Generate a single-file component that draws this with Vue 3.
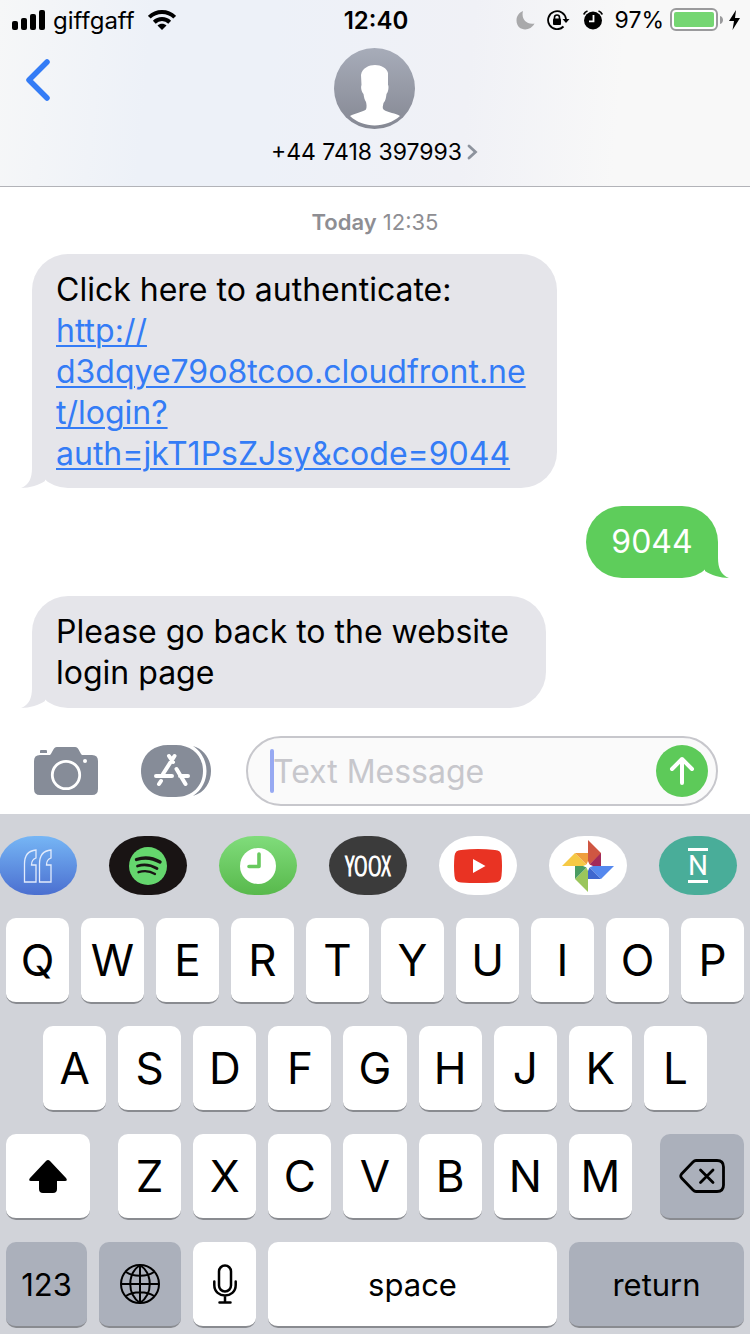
<script setup>
import { ref } from 'vue'

const message = ref('')
const topRow = 'QWERTYUIOP'.split('')
const middleRow = 'ASDFGHJKL'.split('')
const bottomRow = 'ZXCVBNM'.split('')
</script>

<template>
  <main class="phone">
    <header class="header">
      <div class="status">
        <div class="status-side">
          <svg width="34" height="20" viewBox="0 0 34 20" aria-hidden="true">
            <rect x="0" y="11" width="6" height="9" rx="2" />
            <rect x="9" y="8" width="6" height="12" rx="2" />
            <rect x="18" y="4" width="6" height="16" rx="2" />
            <rect x="27" y="0" width="6" height="20" rx="2" />
          </svg>
          <span class="carrier">giffgaff</span>
          <svg width="28" height="20" viewBox="0 0 28 20" aria-hidden="true">
            <g fill="none" stroke="#000" stroke-width="4">
              <path d="M1.3 7.2C8.300 .3 19.700 .3 26.700 7.200" />
              <path d="M6.300 12.200C10.600 8 17.400 8 21.700 12.200" />
            </g>
            <path d="M9.500 15.500C12 13.300 16 13.300 18.500 15.500L14 20Z" />
          </svg>
        </div>
        <span class="clock">12:40</span>
        <div class="status-side status-right">
          <svg width="19" height="19" viewBox="0 0 18 19" aria-hidden="true">
            <path d="M6.500 0C4.500 7.500 9.500 14 18 12.500C13.500 21.500 0 20 0 9.500C0 5 2.500 1.500 6.500 0Z" fill="#a9a9ab" />
          </svg>
          <svg class="lock" width="23" height="20" viewBox="0 0 23 20" aria-hidden="true">
            <path d="M16.500 16.500A9 9 0 1 1 19 9" fill="none" stroke="#000" stroke-width="1.800" />
            <path d="M15.500 9H22.500L19 13Z" />
            <rect x="6" y="8.500" width="8" height="6.500" rx="1" />
            <path d="M7.500 9V7.500A2.500 2.500 0 0 1 12.500 7.500V9" fill="none" stroke="#000" stroke-width="1.600" />
          </svg>
          <svg class="alarm" width="20" height="20" viewBox="0 0 20 20" aria-hidden="true">
            <circle cx="10" cy="10.500" r="9" />
            <path d="M.8 4.500A6 6 0 0 1 4.500 1M19.200 4.500A6 6 0 0 0 15.500 1" fill="none" stroke="#000" stroke-width="1.800" />
            <path d="M10.500 5V11.300H6" fill="none" stroke="#fff" stroke-width="1.800" />
          </svg>
          <span class="percent">97%</span>
          <svg width="54" height="24" viewBox="0 0 54 24" aria-hidden="true">
            <rect x="1" y="1" width="46" height="21" rx="5" fill="#fff" stroke="#9a9a9c" stroke-width="2" />
            <rect x="4" y="4" width="40" height="15" rx="2" fill="#75d672" />
            <path d="M50 8C54 9 54 15 50 16Z" fill="#9a9a9c" />
          </svg>
          <svg class="bolt" width="11" height="20" viewBox="0 0 11 20" aria-hidden="true">
            <path d="M7 0L0 11H5L3.500 20L11 8H6Z" />
          </svg>
        </div>
      </div>
      <div class="contact">
        <button class="back" type="button" aria-label="Back">
          <svg width="26" height="42" viewBox="0 0 26 42">
            <path d="M22 3L4 21L22 39" fill="none" stroke="#347cf6" stroke-width="5.500" stroke-linecap="round" stroke-linejoin="round" />
          </svg>
        </button>
        <button class="person" type="button">
          <svg width="81" height="81" viewBox="0 0 81 81" aria-hidden="true">
            <defs>
              <linearGradient id="avatar" x2="0" y2="1">
                <stop stop-color="#a7acb9" />
                <stop offset="1" stop-color="#858893" />
              </linearGradient>
            </defs>
            <circle cx="40.500" cy="40.500" r="40.500" fill="url(#avatar)" />
            <path d="M41 17C47 17 53 20 54 25L54 37C55 38 54.500 44 52.500 46C52 50 51.500 53 49.500 55C49 58 48 60 49.500 61.500C54 65 62 65 66 68C52 80.500 29 80.500 16 68C21 65 28 64.500 32 61.500C33 59 32.500 56 32 54C30.500 52 30 49 29.500 46C27.500 44 26.500 39 27.500 37L27 27C28 20 35 17 41 17Z" fill="#fff" />
          </svg>
          <span class="number">+44 7418 397993
            <svg width="11" height="16" viewBox="0 0 11 16" aria-hidden="true">
              <path d="M2 2L8.500 8L2 14" fill="none" stroke="#8d939d" stroke-width="2.800" stroke-linecap="round" />
            </svg>
          </span>
        </button>
      </div>
    </header>

    <section class="thread" aria-label="Conversation">
      <p class="stamp"><strong>Today</strong> 12:35</p>
      <p class="bubble received wide">
        Click here to authenticate:<br />
        <a href="http://d3dqye79o8tcoo.cloudfront.net/login?auth=jkT1PsZJsy&amp;code=9044">http://<br />d3dqye79o8tcoo.cloudfront.ne<br />t/login?<br />auth=jkT1PsZJsy&amp;code=9044</a>
        <svg class="tail" width="26" height="36" viewBox="0 0 26 36" aria-hidden="true">
          <path d="M11 0V16C11 26 8 33 0 36C9 36 18 33 24 29L24 0Z" fill="#e5e5ea" />
        </svg>
      </p>
      <p class="bubble sent">
        9044
        <svg class="tail" width="26" height="36" viewBox="0 0 26 36" aria-hidden="true">
          <path d="M15 0V16C15 26 18 33 26 36C17 36 8 33 2 29L2 0Z" fill="#5ecd5b" />
        </svg>
      </p>
      <p class="bubble received">
        Please go back to the website<br />login page
        <svg class="tail" width="26" height="36" viewBox="0 0 26 36" aria-hidden="true">
          <path d="M11 0V16C11 26 8 33 0 36C9 36 18 33 24 29L24 0Z" fill="#e5e5ea" />
        </svg>
      </p>
    </section>

    <form class="composer" @submit.prevent>
      <button class="tool" type="button" aria-label="Camera">
        <svg width="64" height="48" viewBox="0 0 64 48">
          <path d="M6 8H16C18 7 19 0 23 0H41C45 0 46 7 48 8H58Q64 8 64 14V42Q64 48 58 48H6Q0 48 0 42V14Q0 8 6 8ZM7 3H12Q13 3 13 4V6H6V4Q6 3 7 3Z" fill="#868c98" />
          <circle cx="32" cy="28" r="13.700" fill="none" stroke="#fff" stroke-width="2.800" />
          <circle cx="51" cy="14" r="2" fill="#fff" />
        </svg>
      </button>
      <button class="tool store" type="button" aria-label="App Store">
        <svg width="70" height="52" viewBox="0 0 70 52">
          <path d="M52 1C76 8 76 44 52 51C70 39 70 13 52 1Z" fill="#868c98" />
          <path d="M27 0H35C51 0 62 11 62 26S51 52 35 52H27C11 52 0 41 0 26S11 0 27 0Z" fill="#868c98" />
          <g stroke="#fff" stroke-width="4" stroke-linecap="round">
            <path d="M33.500 11L22 29M28 11L32 17M35.500 24L44.500 39M15 31H31M39 31H47M20 36L18 39" />
          </g>
        </svg>
      </button>
      <label class="field">
        <input v-model="message" type="text" placeholder="Text Message" aria-label="Text Message" />
        <button class="send" type="submit" aria-label="Send">
          <svg width="52" height="52" viewBox="0 0 52 52">
            <path d="M26 38V14M16 24L26 14L36 24" fill="none" stroke="#fff" stroke-width="4" stroke-linecap="round" stroke-linejoin="round" />
          </svg>
        </button>
      </label>
    </form>

    <section class="keyboard" aria-label="Keyboard">
      <nav class="apps" aria-label="Message apps">
        <button class="app quotes" type="button" aria-label="Quotes">
          <svg width="30" height="34" viewBox="0 0 30 34" fill="none" stroke="#e2ebfc" stroke-width="1.300">
            <path d="M1.500 33V15C1.500 6 6 1.500 13 1V9C10 10 8.500 12 8.500 16H13V33Z" />
            <path d="M16.500 33V15C16.500 6 21 1.500 28 1V9C25 10 23.500 12 23.500 16H28V33Z" />
          </svg>
        </button>
        <button class="app spotify" type="button" aria-label="Spotify">
          <svg width="38" height="38" viewBox="0 0 38 38">
            <circle cx="19" cy="19" r="19" fill="#65d66e" />
            <g fill="none" stroke="#191414" stroke-linecap="round">
              <path d="M7.500 12.500C15 10 24 11 31 15" stroke-width="3.400" />
              <path d="M8.500 19C15 17 22 18 28 21.500" stroke-width="2.800" />
              <path d="M9.500 25.200C15 23.500 21 24 26 27" stroke-width="2.300" />
            </g>
          </svg>
        </button>
        <button class="app recent" type="button" aria-label="Recents">
          <svg width="36" height="36" viewBox="0 0 36 36">
            <circle cx="18" cy="18" r="18" fill="#fff" />
            <path d="M19 6V18.500H9" fill="none" stroke="#68c95e" stroke-width="3.600" stroke-linecap="round" stroke-linejoin="round" />
          </svg>
        </button>
        <button class="app yoox" type="button">YOOX</button>
        <button class="app white" type="button" aria-label="YouTube">
          <svg width="48" height="34" viewBox="0 0 48 34">
            <path d="M7 1Q24-1 41 1Q47 1 47.500 7Q48.500 17 47.500 27Q47 33 41 33.500Q24 34.500 7 33.500Q1 33 .5 27Q-.5 17 .5 7Q1 1 7 1Z" fill="#e93323" />
            <path d="M19 10L31.500 17L19 24Z" fill="#fff" />
          </svg>
        </button>
        <button class="app white" type="button" aria-label="Photos">
          <svg width="52" height="52" viewBox="0 0 52 52">
            <path d="M26 0L39 13V14L26 26Z" fill="#cf5642" />
            <path d="M39 13V26H26Z" fill="#a32a59" />
            <path d="M52 26L39 39L26 26Z" fill="#5588ee" />
            <path d="M26 26L39 39H26Z" fill="#3f67cf" />
            <path d="M26 52L13 39L26 26Z" fill="#9bc65c" />
            <path d="M13 39V26H26Z" fill="#4a9c62" />
            <path d="M0 26L13 13L26 26Z" fill="#f6c945" />
            <path d="M13 13H26V26Z" fill="#ef9f3d" />
            <path d="M26 21L27.500 24.500L31 26L27.500 27.500L26 31L24.500 27.500L21 26L24.500 24.500Z" fill="#fff" />
          </svg>
        </button>
        <button class="app news" type="button"><span>N</span></button>
      </nav>

      <div class="keys">
        <div class="row">
          <button v-for="k in topRow" :key="k" class="key" type="button">{{ k }}</button>
        </div>
        <div class="row middle">
          <button v-for="k in middleRow" :key="k" class="key" type="button">{{ k }}</button>
        </div>
        <div class="row">
          <button class="key shift" type="button" aria-label="Shift">
            <svg width="38" height="33" viewBox="0 0 38 33">
              <path d="M19 0Q20 0 21 1L37 18Q39 21 36 21H28V29Q28 33 24 33H14Q10 33 10 29V21H2Q-1 21 1 18L17 1Q18 0 19 0Z" />
            </svg>
          </button>
          <button v-for="k in bottomRow" :key="k" class="key" type="button">{{ k }}</button>
          <button class="key dark delete" type="button" aria-label="Delete">
            <svg width="46" height="34" viewBox="0 0 46 34" fill="none" stroke="#000" stroke-width="2.800" stroke-linecap="round" stroke-linejoin="round">
              <path d="M17 1.500H38Q44.500 1.500 44.500 8V26Q44.500 32.500 38 32.500H17Q15.500 32.500 14 31L2.500 19Q1 17 2.500 15L14 3Q15.500 1.500 17 1.500Z" />
              <path d="M21.500 11L34 23.500M34 11L21.500 23.500" />
            </svg>
          </button>
        </div>
        <div class="row">
          <button class="key dark word numbers" type="button">123</button>
          <button class="key dark globe" type="button" aria-label="Next keyboard">
            <svg width="40" height="40" viewBox="0 0 40 40" fill="none" stroke="#000" stroke-width="2">
              <circle cx="20" cy="20" r="19" />
              <path d="M20 1V39M1 20H39M6 8C13 13 27 13 34 8M6 32C13 27 27 27 34 32" />
              <path d="M20 1C7 10 7 30 20 39C33 30 33 10 20 1Z" />
            </svg>
          </button>
          <button class="key" type="button" aria-label="Dictation">
            <svg width="24" height="40" viewBox="0 0 24 40" fill="none" stroke="#000" stroke-width="2.500" stroke-linecap="round">
              <rect x="6" y="1.500" width="12" height="26" rx="6" />
              <path d="M1.300 17.500V21C1.300 35 22.700 35 22.700 21V17.500M12 31.500V38M6.500 38.500H17.500" />
            </svg>
          </button>
          <button class="key word space" type="button">space</button>
          <button class="key dark word return" type="button">return</button>
        </div>
      </div>
    </section>
  </main>
</template>

<style>
body {
  background: #fff;
}
</style>

<style scoped>
.phone {
  min-height: 100vh;
  display: flex;
  flex-direction: column;
  overflow: hidden;
  color: #000;
  font-family: Inter, "Liberation Sans", sans-serif;
}

button {
  padding: 0;
  border: 0;
  background: none;
  color: inherit;
  font: inherit;
}

svg {
  display: block;
  flex: none;
}

.header {
  padding-bottom: 19px;
  border-bottom: 1px solid #b2b3b8;
  background: linear-gradient(95deg, #f6f7f8 0, #edf1f8 20%, #edf1f8 36%, #f0f1f6 62%, #f8f8f8 82%);
}

.status {
  display: grid;
  grid-template-columns: 1fr auto 1fr;
  align-items: center;
  height: 40px;
  padding: 0 10px 0 12px;
}

.status-side {
  display: flex;
  align-items: center;
}

.status-right {
  justify-content: flex-end;
}

.carrier {
  margin: 0 13px 0 7px;
  font-size: 24px;
}

.clock {
  font-size: 24px;
  font-weight: 600;
}

.lock {
  margin-left: 12px;
}

.alarm {
  margin-left: 13px;
}

.percent {
  margin: 0 6px 0 12px;
  font-size: 23px;
}

.bolt {
  margin-left: 5px;
}

.contact {
  display: grid;
  grid-template-columns: 1fr auto 1fr;
  align-items: start;
  padding: 8px 0 0 25px;
}

.back {
  justify-self: start;
  padding: 11px 0;
}

.person {
  display: flex;
  flex-direction: column;
  align-items: center;
  gap: 8px;
  margin-right: 26px;
}

.number {
  display: flex;
  align-items: center;
  gap: 5px;
  font-size: 23px;
  line-height: 30px;
}

.thread {
  flex: 1;
  display: flex;
  flex-direction: column;
  gap: 18px;
  padding: 21px 32px 28px;
}

.stamp {
  margin: 0;
  color: #8e8e93;
  font-size: 22px;
  line-height: 28px;
  text-align: center;
}

.stamp strong {
  font-weight: 600;
}

.bubble {
  position: relative;
  min-width: 514px;
  margin: 0;
  padding: 15px 24px;
  box-sizing: border-box;
  border-radius: 36px;
  font-size: 32px;
  line-height: 41px;
  white-space: nowrap;
}

.received {
  align-self: flex-start;
  background: #e5e5ea;
}

.wide {
  min-width: 525px;
  padding-bottom: 14px;
}

.sent {
  align-self: flex-end;
  min-width: 132px;
  padding-bottom: 16px;
  background: #5ecd5b;
  color: #fff;
  text-align: center;
}

.bubble a {
  color: #347cf6;
  text-decoration-thickness: 2px;
  text-underline-offset: 3px;
}

.tail {
  position: absolute;
  bottom: 0;
}

.received .tail {
  left: -11px;
}

.sent .tail {
  right: -11px;
}

.composer {
  display: flex;
  align-items: center;
  padding: 0 32px 8px 34px;
}

.store {
  margin: 0 35px 0 43px;
}

.field {
  position: relative;
  flex: 1;
  min-width: 0;
  display: flex;
  align-items: center;
  height: 66px;
  padding: 0 8px 0 25px;
  border: 2px solid #c7c7cc;
  border-radius: 35px;
  background: #fafafa;
}

.field::before {
  content: "";
  position: absolute;
  left: 22px;
  width: 4px;
  height: 44px;
  border-radius: 2px;
  background: #97a9f2;
}

.field input {
  flex: 1;
  min-width: 0;
  padding: 0;
  border: 0;
  outline: 0;
  background: none;
  font: inherit;
  font-size: 32px;
}

.field input::placeholder {
  color: #c7c7cc;
  opacity: 1;
}

.send {
  border-radius: 50%;
  background: #5dca59;
}

.keyboard {
  padding-bottom: 6px;
  background: #d1d3d9;
}

.apps {
  display: flex;
  justify-content: space-between;
  margin: 0 13px 0 -1px;
  padding: 22px 0 23px;
}

.app {
  display: flex;
  align-items: center;
  justify-content: center;
  width: 78px;
  height: 59px;
  border-radius: 36px / 30px;
}

.quotes {
  background: linear-gradient(#76b6f5, #4b6fd0);
}

.spotify {
  background: #191414;
}

.recent {
  background: linear-gradient(#80dc7b, #58b94c);
}

.yoox {
  background: #3b3b3b;
  color: #fff;
  font-family: "Open Sans Condensed Light", "Roboto Condensed Light", "Open Sans Condensed", "Liberation Sans Narrow", sans-serif;
  font-size: 27px;
  font-weight: 300;
  line-height: 30px;
  -webkit-text-stroke: 1px #fff;
}

.white {
  background: #fff;
}

.news {
  background: #49ad99;
  color: #fff;
  font-family: Roboto, sans-serif;
  font-size: 28px;
}

.news span {
  border: solid #fff;
  border-width: 3px 0;
  line-height: 29px;
}

.keys {
  display: flex;
  flex-direction: column;
  gap: 22px;
  padding: 0 6px;
}

.row {
  display: flex;
  gap: 12px;
}

.middle {
  padding: 0 37px;
}

.key {
  flex: 63 1 0;
  min-width: 0;
  height: 86px;
  display: flex;
  align-items: center;
  justify-content: center;
  border-bottom: 2px solid #898b90;
  border-radius: 10px;
  background: #fff;
  font-size: 44px;
}

.dark {
  background: #abb0bb;
}

.word {
  font-size: 31px;
}

.shift {
  flex-grow: 84;
  margin-right: 16px;
}

.delete {
  flex-grow: 84;
  margin-left: 16px;
}

.numbers {
  flex-grow: 81;
}

.globe {
  flex-grow: 82;
}

.space {
  flex-grow: 289;
}

.return {
  flex-grow: 175;
}
</style>
